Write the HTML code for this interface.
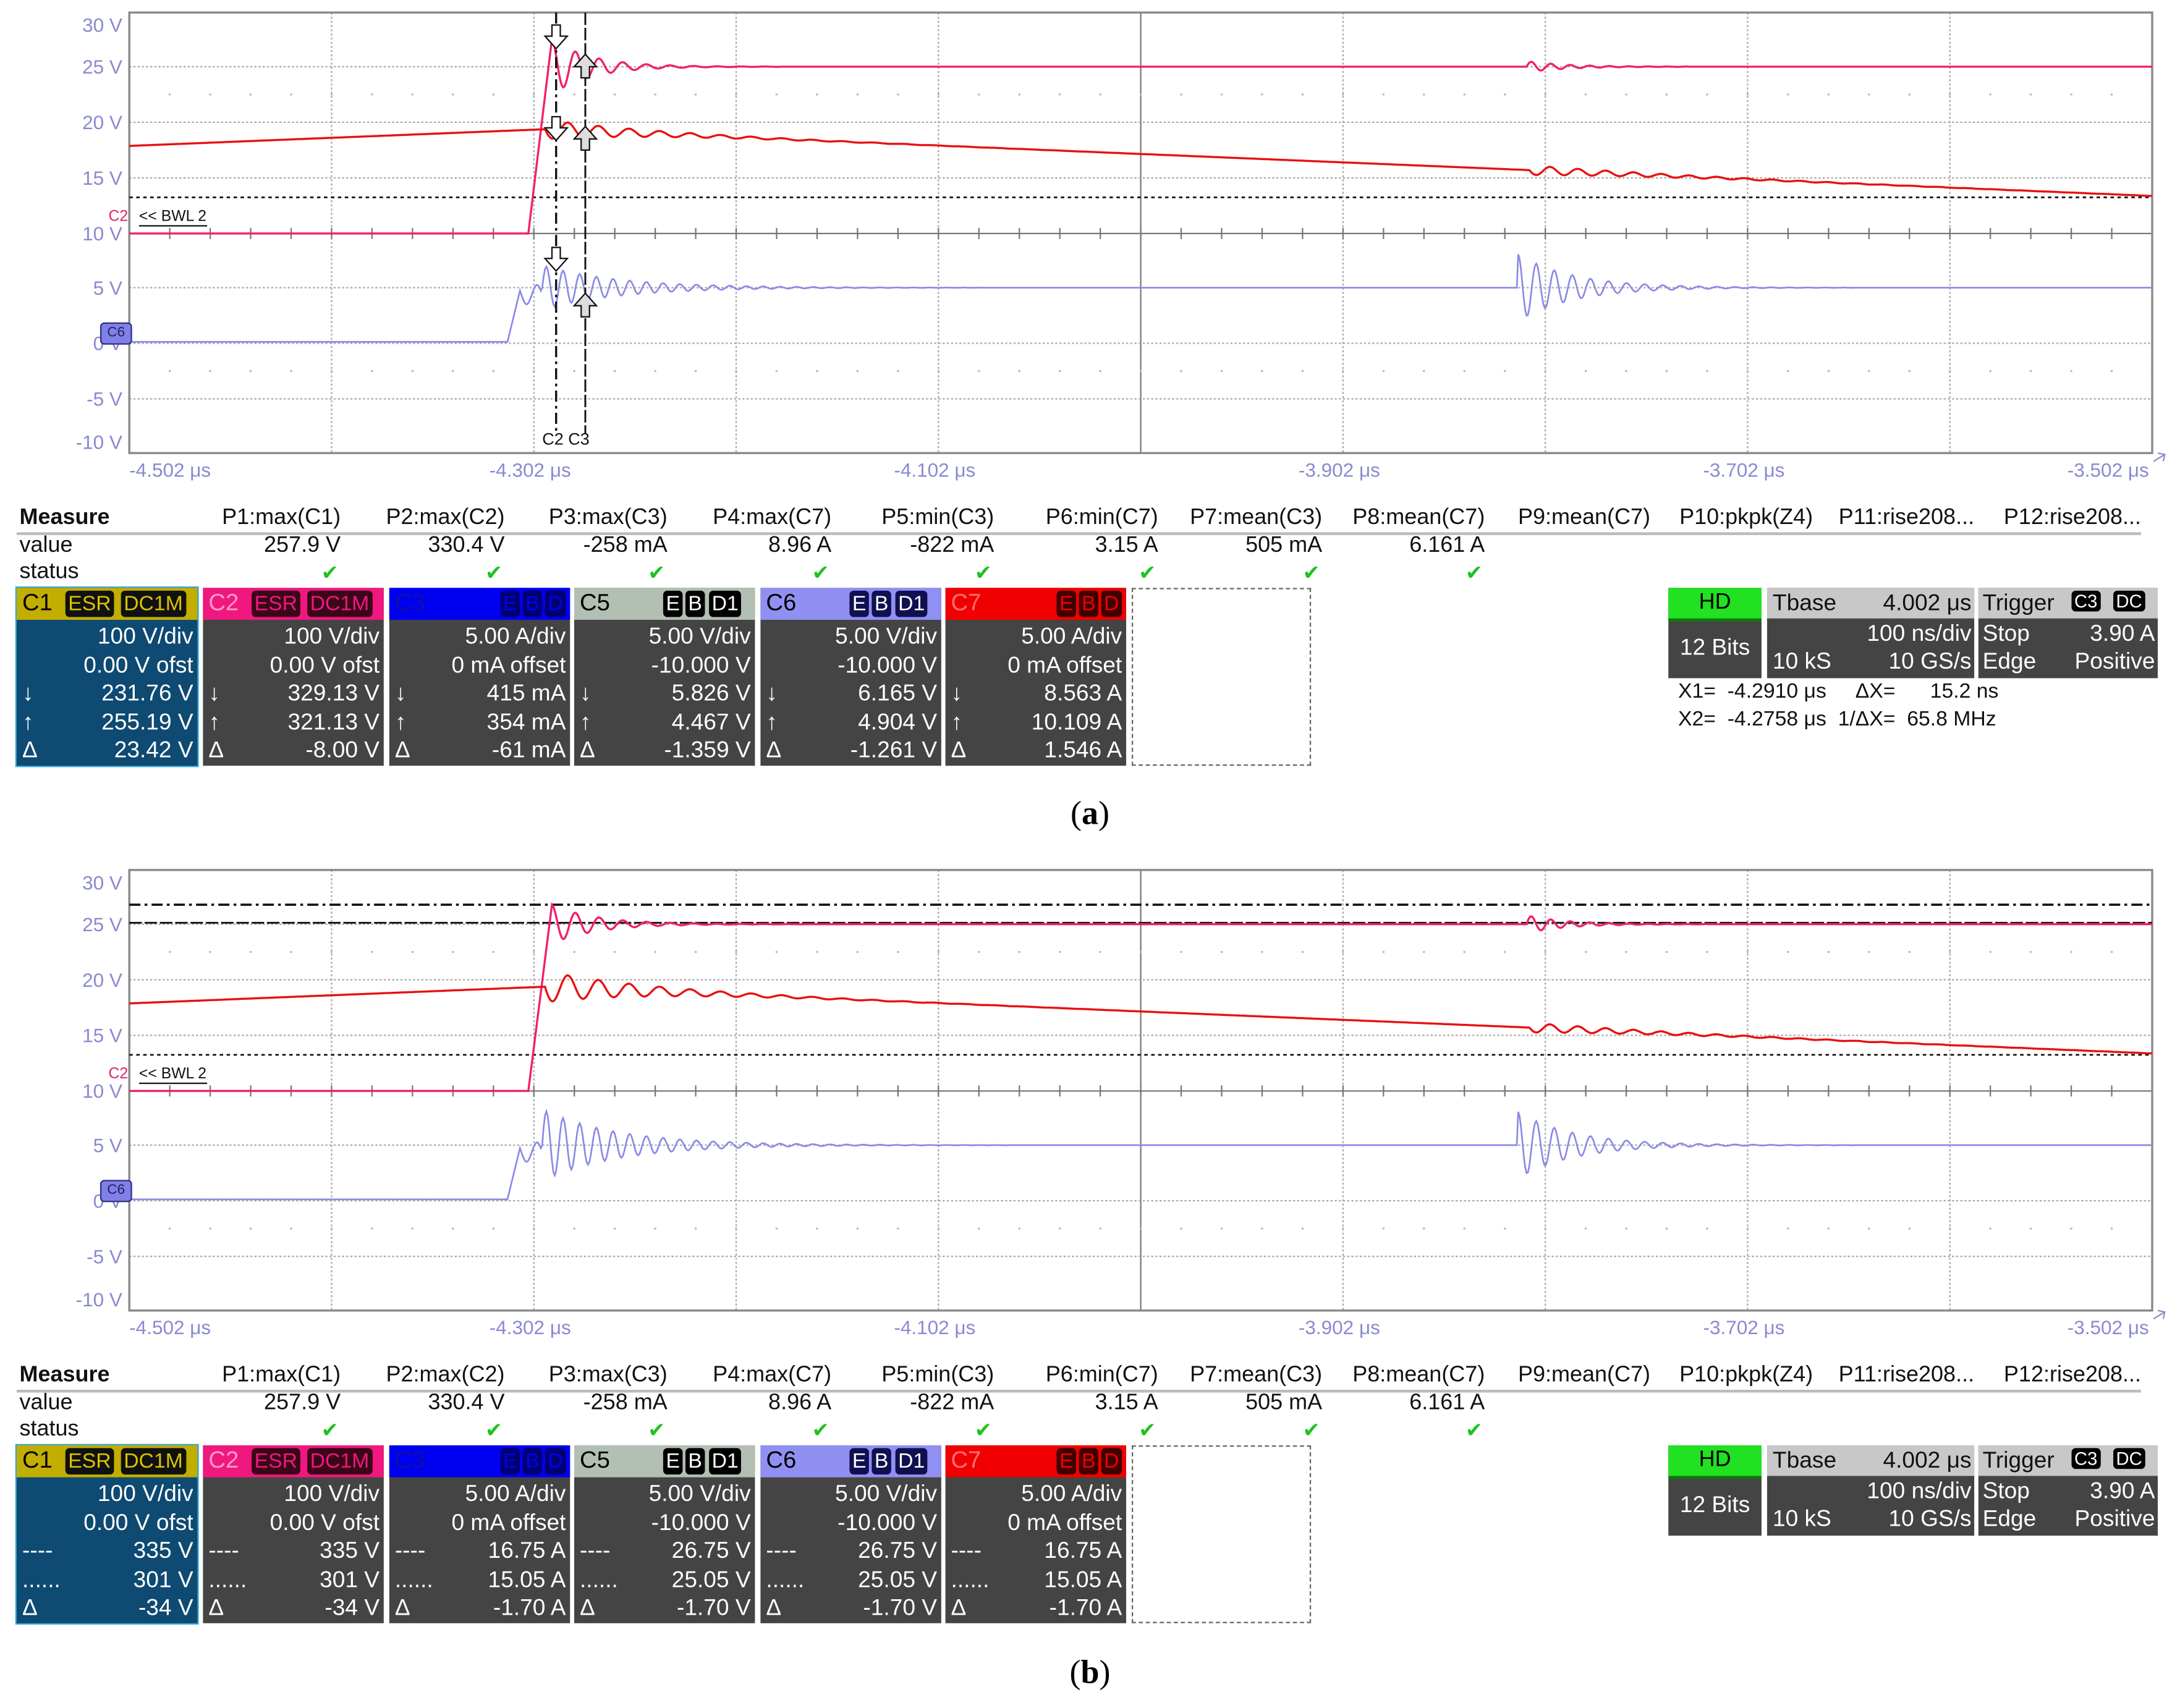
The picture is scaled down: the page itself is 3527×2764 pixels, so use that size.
<!DOCTYPE html>
<html><head><meta charset="utf-8">
<style>
html,body{margin:0;padding:0;background:#fff;}
body{width:3527px;height:2764px;overflow:hidden;position:relative;}
#w{position:absolute;left:0;top:0;width:1568px;height:1229px;transform:scale(2.24936,2.24898);transform-origin:0 0;font-family:"Liberation Sans Narrow","Liberation Sans",sans-serif;}
.p{position:absolute;left:0;width:1568px;height:600px;}
.a{position:absolute;white-space:nowrap;}
.ax{color:#8a8ad0;font-size:14px;}
.m{font-size:16px;color:#111;}
.r{text-align:right;}
.box{position:absolute;top:423px;width:130px;height:128px;background:#444;}
.hd{position:absolute;left:0;top:0;width:130px;height:23px;font-size:17px;}
.hd span.n{position:absolute;left:4px;top:1px;}
.pl{position:absolute;top:2px;height:19px;border-radius:3px;font-size:15px;line-height:19px;padding:0 2px;}
.rows{position:absolute;left:0;top:25px;width:130px;color:#fff;font-size:16.5px;}
.rows div{height:20.6px;line-height:20.6px;position:relative;text-align:right;padding-right:3px;}
.rows div i{position:absolute;left:4px;font-style:normal;}
.ck{position:absolute;color:#1fc21f;font-size:15px;top:403px;}
.cap{position:absolute;left:0;width:1568px;text-align:center;font-family:"Liberation Serif",serif;font-size:24px;color:#000;}
</style></head><body><div id="w">

<!-- ===== PANEL A ===== -->
<div class="p" id="pa" style="top:0">
<svg id="sa" width="1568" height="360" style="position:absolute;left:0;top:0"></svg>
<div class="a ax r" style="left:40px;top:10px;width:48px">30 V</div>
<div class="a ax r" style="left:40px;top:40px;width:48px">25 V</div>
<div class="a ax r" style="left:40px;top:80px;width:48px">20 V</div>
<div class="a ax r" style="left:40px;top:120px;width:48px">15 V</div>
<div class="a ax r" style="left:40px;top:160px;width:48px">10 V</div>
<div class="a ax r" style="left:40px;top:199px;width:48px">5 V</div>
<div class="a ax r" style="left:40px;top:239px;width:48px">0 V</div>
<div class="a ax r" style="left:40px;top:279px;width:48px">-5 V</div>
<div class="a ax r" style="left:40px;top:310px;width:48px">-10 V</div>
<div class="a ax" style="left:93px;top:330px">-4.502 μs</div>
<div class="a ax" style="left:352px;top:330px">-4.302 μs</div>
<div class="a ax" style="left:643px;top:330px">-4.102 μs</div>
<div class="a ax" style="left:934px;top:330px">-3.902 μs</div>
<div class="a ax" style="left:1225px;top:330px">-3.702 μs</div>
<div class="a ax" style="left:1487px;top:330px">-3.502 μs</div>
<div class="a" style="left:78px;top:150px;color:#e0206a;font-size:11px">C2</div>
<div class="a" style="left:100px;top:150px;color:#111;font-size:11px;border-bottom:1px solid #111">&lt;&lt; BWL 2</div>
<div class="a" style="left:72px;top:232px;width:21px;height:14px;background:#8080e8;border:1px solid #303080;border-radius:3px;font-size:10px;text-align:center;line-height:14px;color:#202060">C6</div>
<div class="a" style="left:390px;top:309px;font-size:12px;color:#111">C2 C3</div>
</div>

<!-- ===== PANEL B ===== -->
<div class="p" id="pb" style="top:617px">
<svg id="sb" width="1568" height="360" style="position:absolute;left:0;top:0"></svg>
<div class="a ax r" style="left:40px;top:10px;width:48px">30 V</div>
<div class="a ax r" style="left:40px;top:40px;width:48px">25 V</div>
<div class="a ax r" style="left:40px;top:80px;width:48px">20 V</div>
<div class="a ax r" style="left:40px;top:120px;width:48px">15 V</div>
<div class="a ax r" style="left:40px;top:160px;width:48px">10 V</div>
<div class="a ax r" style="left:40px;top:199px;width:48px">5 V</div>
<div class="a ax r" style="left:40px;top:239px;width:48px">0 V</div>
<div class="a ax r" style="left:40px;top:279px;width:48px">-5 V</div>
<div class="a ax r" style="left:40px;top:310px;width:48px">-10 V</div>
<div class="a ax" style="left:93px;top:330px">-4.502 μs</div>
<div class="a ax" style="left:352px;top:330px">-4.302 μs</div>
<div class="a ax" style="left:643px;top:330px">-4.102 μs</div>
<div class="a ax" style="left:934px;top:330px">-3.902 μs</div>
<div class="a ax" style="left:1225px;top:330px">-3.702 μs</div>
<div class="a ax" style="left:1487px;top:330px">-3.502 μs</div>
<div class="a" style="left:78px;top:150px;color:#e0206a;font-size:11px">C2</div>
<div class="a" style="left:100px;top:150px;color:#111;font-size:11px;border-bottom:1px solid #111">&lt;&lt; BWL 2</div>
<div class="a" style="left:72px;top:232px;width:21px;height:14px;background:#8080e8;border:1px solid #303080;border-radius:3px;font-size:10px;text-align:center;line-height:14px;color:#202060">C6</div>
</div>

<!-- ===== MEASURE A ===== -->
<div class="p" style="top:0">
<div class="a m" style="left:14px;top:364px;font-weight:bold">Measure</div>
<div style="position:absolute;left:12px;top:383px;width:1528px;height:2px;background:#bbb"></div>
<div class="a m" style="left:14px;top:384px">value</div>
<div class="a m" style="left:14px;top:403px">status</div>
<div class="a m r" style="left:125px;width:120px;top:364px">P1:max(C1)</div>
<div class="a m r" style="left:243px;width:120px;top:364px">P2:max(C2)</div>
<div class="a m r" style="left:360px;width:120px;top:364px">P3:max(C3)</div>
<div class="a m r" style="left:478px;width:120px;top:364px">P4:max(C7)</div>
<div class="a m r" style="left:595px;width:120px;top:364px">P5:min(C3)</div>
<div class="a m r" style="left:713px;width:120px;top:364px">P6:min(C7)</div>
<div class="a m r" style="left:831px;width:120px;top:364px">P7:mean(C3)</div>
<div class="a m r" style="left:948px;width:120px;top:364px">P8:mean(C7)</div>
<div class="a m r" style="left:1067px;width:120px;top:364px">P9:mean(C7)</div>
<div class="a m r" style="left:1184px;width:120px;top:364px">P10:pkpk(Z4)</div>
<div class="a m r" style="left:1300px;width:120px;top:364px">P11:rise208...</div>
<div class="a m r" style="left:1420px;width:120px;top:364px">P12:rise208...</div>
<div class="a m r" style="left:125px;width:120px;top:384px">257.9 V</div>
<div class="a m r" style="left:243px;width:120px;top:384px">330.4 V</div>
<div class="a m r" style="left:360px;width:120px;top:384px">-258 mA</div>
<div class="a m r" style="left:478px;width:120px;top:384px">8.96 A</div>
<div class="a m r" style="left:595px;width:120px;top:384px">-822 mA</div>
<div class="a m r" style="left:713px;width:120px;top:384px">3.15 A</div>
<div class="a m r" style="left:831px;width:120px;top:384px">505 mA</div>
<div class="a m r" style="left:948px;width:120px;top:384px">6.161 A</div>
<div class="ck" style="left:231px">✔</div><div class="ck" style="left:349px">✔</div><div class="ck" style="left:466px">✔</div><div class="ck" style="left:584px">✔</div><div class="ck" style="left:701px">✔</div><div class="ck" style="left:819px">✔</div><div class="ck" style="left:937px">✔</div><div class="ck" style="left:1054px">✔</div>
</div>
<div class="p" style="top:617px">
<div class="a m" style="left:14px;top:364px;font-weight:bold">Measure</div>
<div style="position:absolute;left:12px;top:383px;width:1528px;height:2px;background:#bbb"></div>
<div class="a m" style="left:14px;top:384px">value</div>
<div class="a m" style="left:14px;top:403px">status</div>
<div class="a m r" style="left:125px;width:120px;top:364px">P1:max(C1)</div>
<div class="a m r" style="left:243px;width:120px;top:364px">P2:max(C2)</div>
<div class="a m r" style="left:360px;width:120px;top:364px">P3:max(C3)</div>
<div class="a m r" style="left:478px;width:120px;top:364px">P4:max(C7)</div>
<div class="a m r" style="left:595px;width:120px;top:364px">P5:min(C3)</div>
<div class="a m r" style="left:713px;width:120px;top:364px">P6:min(C7)</div>
<div class="a m r" style="left:831px;width:120px;top:364px">P7:mean(C3)</div>
<div class="a m r" style="left:948px;width:120px;top:364px">P8:mean(C7)</div>
<div class="a m r" style="left:1067px;width:120px;top:364px">P9:mean(C7)</div>
<div class="a m r" style="left:1184px;width:120px;top:364px">P10:pkpk(Z4)</div>
<div class="a m r" style="left:1300px;width:120px;top:364px">P11:rise208...</div>
<div class="a m r" style="left:1420px;width:120px;top:364px">P12:rise208...</div>
<div class="a m r" style="left:125px;width:120px;top:384px">257.9 V</div>
<div class="a m r" style="left:243px;width:120px;top:384px">330.4 V</div>
<div class="a m r" style="left:360px;width:120px;top:384px">-258 mA</div>
<div class="a m r" style="left:478px;width:120px;top:384px">8.96 A</div>
<div class="a m r" style="left:595px;width:120px;top:384px">-822 mA</div>
<div class="a m r" style="left:713px;width:120px;top:384px">3.15 A</div>
<div class="a m r" style="left:831px;width:120px;top:384px">505 mA</div>
<div class="a m r" style="left:948px;width:120px;top:384px">6.161 A</div>
<div class="ck" style="left:231px">✔</div><div class="ck" style="left:349px">✔</div><div class="ck" style="left:466px">✔</div><div class="ck" style="left:584px">✔</div><div class="ck" style="left:701px">✔</div><div class="ck" style="left:819px">✔</div><div class="ck" style="left:937px">✔</div><div class="ck" style="left:1054px">✔</div>
</div>

<!-- ===== CHANNEL BOXES A ===== -->
<div class="p" style="top:0">
<div class="box" style="left:12px;background:#0e4a72;box-shadow:0 0 0 1px #39a8dc"><div class="hd" style="background:#c2ae00"><span class="n" style="color:#000">C1</span><span class="pl" style="left:35px;background:#111;color:#d8c400">ESR</span><span class="pl" style="left:75px;background:#111;color:#d8c400">DC1M</span></div>
<div class="rows"><div>100 V/div</div><div>0.00 V ofst</div><div><i>↓</i>231.76 V</div><div><i>↑</i>255.19 V</div><div><i>Δ</i>23.42 V</div></div></div>
<div class="box" style="left:146px"><div class="hd" style="background:#f0187e"><span class="n" style="color:#ff9ac8">C2</span><span class="pl" style="left:35px;background:#3a0618;color:#f0187e">ESR</span><span class="pl" style="left:75px;background:#3a0618;color:#f0187e">DC1M</span></div>
<div class="rows"><div>100 V/div</div><div>0.00 V ofst</div><div><i>↓</i>329.13 V</div><div><i>↑</i>321.13 V</div><div><i>Δ</i>-8.00 V</div></div></div>
<div class="box" style="left:280px"><div class="hd" style="background:#0000f0"><span class="n" style="color:#1010a0">C3</span><span class="pl" style="left:80px;background:#000070;color:#0000f0">E</span><span class="pl" style="left:96px;background:#000070;color:#0000f0">B</span><span class="pl" style="left:112px;background:#000070;color:#0000f0">D</span></div>
<div class="rows"><div>5.00 A/div</div><div>0 mA offset</div><div><i>↓</i>415 mA</div><div><i>↑</i>354 mA</div><div><i>Δ</i>-61 mA</div></div></div>
<div class="box" style="left:413px"><div class="hd" style="background:#b2bfb2"><span class="n" style="color:#000">C5</span><span class="pl" style="left:64px;background:#000;color:#fff">E</span><span class="pl" style="left:80px;background:#000;color:#fff">B</span><span class="pl" style="left:97px;background:#000;color:#fff">D1</span></div>
<div class="rows"><div>5.00 V/div</div><div>-10.000 V</div><div><i>↓</i>5.826 V</div><div><i>↑</i>4.467 V</div><div><i>Δ</i>-1.359 V</div></div></div>
<div class="box" style="left:547px"><div class="hd" style="background:#9090f2"><span class="n" style="color:#000">C6</span><span class="pl" style="left:64px;background:#101050;color:#fff">E</span><span class="pl" style="left:80px;background:#101050;color:#fff">B</span><span class="pl" style="left:97px;background:#101050;color:#fff">D1</span></div>
<div class="rows"><div>5.00 V/div</div><div>-10.000 V</div><div><i>↓</i>6.165 V</div><div><i>↑</i>4.904 V</div><div><i>Δ</i>-1.261 V</div></div></div>
<div class="box" style="left:680px"><div class="hd" style="background:#f00000"><span class="n" style="color:#ff7070">C7</span><span class="pl" style="left:80px;background:#400000;color:#f00000">E</span><span class="pl" style="left:96px;background:#400000;color:#f00000">B</span><span class="pl" style="left:112px;background:#400000;color:#f00000">D</span></div>
<div class="rows"><div>5.00 A/div</div><div>0 mA offset</div><div><i>↓</i>8.563 A</div><div><i>↑</i>10.109 A</div><div><i>Δ</i>1.546 A</div></div></div>
<div style="position:absolute;left:814px;top:423px;width:127px;height:126px;border:1px dashed #666"></div>
</div>

<!-- ===== CHANNEL BOXES B ===== -->
<div class="p" style="top:617px">
<div class="box" style="left:12px;background:#0e4a72;box-shadow:0 0 0 1px #39a8dc"><div class="hd" style="background:#c2ae00"><span class="n" style="color:#000">C1</span><span class="pl" style="left:35px;background:#111;color:#d8c400">ESR</span><span class="pl" style="left:75px;background:#111;color:#d8c400">DC1M</span></div>
<div class="rows"><div>100 V/div</div><div>0.00 V ofst</div><div><i>----</i>335 V</div><div><i>......</i>301 V</div><div><i>Δ</i>-34 V</div></div></div>
<div class="box" style="left:146px"><div class="hd" style="background:#f0187e"><span class="n" style="color:#ff9ac8">C2</span><span class="pl" style="left:35px;background:#3a0618;color:#f0187e">ESR</span><span class="pl" style="left:75px;background:#3a0618;color:#f0187e">DC1M</span></div>
<div class="rows"><div>100 V/div</div><div>0.00 V ofst</div><div><i>----</i>335 V</div><div><i>......</i>301 V</div><div><i>Δ</i>-34 V</div></div></div>
<div class="box" style="left:280px"><div class="hd" style="background:#0000f0"><span class="n" style="color:#1010a0">C3</span><span class="pl" style="left:80px;background:#000070;color:#0000f0">E</span><span class="pl" style="left:96px;background:#000070;color:#0000f0">B</span><span class="pl" style="left:112px;background:#000070;color:#0000f0">D</span></div>
<div class="rows"><div>5.00 A/div</div><div>0 mA offset</div><div><i>----</i>16.75 A</div><div><i>......</i>15.05 A</div><div><i>Δ</i>-1.70 A</div></div></div>
<div class="box" style="left:413px"><div class="hd" style="background:#b2bfb2"><span class="n" style="color:#000">C5</span><span class="pl" style="left:64px;background:#000;color:#fff">E</span><span class="pl" style="left:80px;background:#000;color:#fff">B</span><span class="pl" style="left:97px;background:#000;color:#fff">D1</span></div>
<div class="rows"><div>5.00 V/div</div><div>-10.000 V</div><div><i>----</i>26.75 V</div><div><i>......</i>25.05 V</div><div><i>Δ</i>-1.70 V</div></div></div>
<div class="box" style="left:547px"><div class="hd" style="background:#9090f2"><span class="n" style="color:#000">C6</span><span class="pl" style="left:64px;background:#101050;color:#fff">E</span><span class="pl" style="left:80px;background:#101050;color:#fff">B</span><span class="pl" style="left:97px;background:#101050;color:#fff">D1</span></div>
<div class="rows"><div>5.00 V/div</div><div>-10.000 V</div><div><i>----</i>26.75 V</div><div><i>......</i>25.05 V</div><div><i>Δ</i>-1.70 V</div></div></div>
<div class="box" style="left:680px"><div class="hd" style="background:#f00000"><span class="n" style="color:#ff7070">C7</span><span class="pl" style="left:80px;background:#400000;color:#f00000">E</span><span class="pl" style="left:96px;background:#400000;color:#f00000">B</span><span class="pl" style="left:112px;background:#400000;color:#f00000">D</span></div>
<div class="rows"><div>5.00 A/div</div><div>0 mA offset</div><div><i>----</i>16.75 A</div><div><i>......</i>15.05 A</div><div><i>Δ</i>-1.70 A</div></div></div>
<div style="position:absolute;left:814px;top:423px;width:127px;height:126px;border:1px dashed #666"></div>
</div>

<!-- ===== RIGHT STATUS BOXES ===== -->
<div class="p" style="top:0">
<div style="position:absolute;left:1200px;top:423px;width:67px;height:65px;background:#444"><div style="height:22px;background:#22e022;border-bottom:2px solid #0a7a0a;text-align:center;font-size:16px;line-height:22px;color:#000">HD</div><div style="color:#fff;font-size:16.5px;text-align:center;margin-top:10px">12 Bits</div></div>
<div style="position:absolute;left:1271px;top:423px;width:149px;height:65px;background:#444;color:#fff;font-size:16.5px"><div style="height:22px;background:#c8c8c8;color:#111;position:relative"><span style="position:absolute;left:4px;top:2px">Tbase</span><span style="position:absolute;right:2px;top:2px">4.002 μs</span></div><div style="position:absolute;right:2px;top:24px">100 ns/div</div><div style="position:absolute;left:4px;top:44px">10 kS</div><div style="position:absolute;right:2px;top:44px">10 GS/s</div></div>
<div style="position:absolute;left:1423px;top:423px;width:129px;height:65px;background:#444;color:#fff;font-size:16.5px"><div style="height:22px;background:#c8c8c8;color:#111;position:relative"><span style="position:absolute;left:3px;top:2px">Trigger</span><span style="position:absolute;left:67px;top:2px;background:#000;color:#fff;font-size:13px;padding:0 2px;border-radius:3px">C3</span><span style="position:absolute;left:97px;top:2px;background:#000;color:#fff;font-size:13px;padding:0 2px;border-radius:3px">DC</span></div><div style="position:absolute;left:3px;top:24px">Stop</div><div style="position:absolute;right:2px;top:24px">3.90 A</div><div style="position:absolute;left:3px;top:44px">Edge</div><div style="position:absolute;right:2px;top:44px">Positive</div></div>
<div class="a m" style="left:1207px;top:489px;font-size:15px">X1=&nbsp; -4.2910 μs&nbsp;&nbsp;&nbsp;&nbsp; ΔX=&nbsp;&nbsp;&nbsp;&nbsp;&nbsp; 15.2 ns</div>
<div class="a m" style="left:1207px;top:509px;font-size:15px">X2=&nbsp; -4.2758 μs&nbsp; 1/ΔX=&nbsp; 65.8 MHz</div>
</div>
<div class="p" style="top:617px">
<div style="position:absolute;left:1200px;top:423px;width:67px;height:65px;background:#444"><div style="height:22px;background:#22e022;border-bottom:2px solid #0a7a0a;text-align:center;font-size:16px;line-height:22px;color:#000">HD</div><div style="color:#fff;font-size:16.5px;text-align:center;margin-top:10px">12 Bits</div></div>
<div style="position:absolute;left:1271px;top:423px;width:149px;height:65px;background:#444;color:#fff;font-size:16.5px"><div style="height:22px;background:#c8c8c8;color:#111;position:relative"><span style="position:absolute;left:4px;top:2px">Tbase</span><span style="position:absolute;right:2px;top:2px">4.002 μs</span></div><div style="position:absolute;right:2px;top:24px">100 ns/div</div><div style="position:absolute;left:4px;top:44px">10 kS</div><div style="position:absolute;right:2px;top:44px">10 GS/s</div></div>
<div style="position:absolute;left:1423px;top:423px;width:129px;height:65px;background:#444;color:#fff;font-size:16.5px"><div style="height:22px;background:#c8c8c8;color:#111;position:relative"><span style="position:absolute;left:3px;top:2px">Trigger</span><span style="position:absolute;left:67px;top:2px;background:#000;color:#fff;font-size:13px;padding:0 2px;border-radius:3px">C3</span><span style="position:absolute;left:97px;top:2px;background:#000;color:#fff;font-size:13px;padding:0 2px;border-radius:3px">DC</span></div><div style="position:absolute;left:3px;top:24px">Stop</div><div style="position:absolute;right:2px;top:24px">3.90 A</div><div style="position:absolute;left:3px;top:44px">Edge</div><div style="position:absolute;right:2px;top:44px">Positive</div></div>
</div>

<div class="cap" style="top:573px">(<b>a</b>)</div>
<div class="cap" style="top:1191px">(<b>b</b>)</div>
</div>

<script>
(function(){
var NS="http://www.w3.org/2000/svg";
function el(svg,tag,attrs){var e=document.createElementNS(NS,tag);for(var k in attrs)e.setAttribute(k,attrs[k]);svg.appendChild(e);return e;}
function ring(x,x0,A,tau,P){if(x<x0)return 0;var t=x-x0;return A*Math.exp(-t/tau)*Math.sin(2*Math.PI*t/P);}
function path(f){var s="";for(var x=93;x<=1548;x+=1){s+=(x==93?"M":"L")+x+","+f(x).toFixed(1);}return s;}
function grid(svg,b){
  var L=93,R=1548,T=9,B=326;
  for(var i=1;i<10;i++){var x=L+i*145.5;el(svg,"line",{x1:x,y1:T,x2:x,y2:B,stroke:i==5?"#777":"#aaa","stroke-width":1,"stroke-dasharray":i==5?"":"1.5 1.5"});}
  var ys=[48,88,128,168,207,247,287];
  ys.forEach(function(y){el(svg,"line",{x1:L,y1:y,x2:R,y2:y,stroke:y==168?"#777":"#aaa","stroke-width":1,"stroke-dasharray":y==168?"":"1.5 1.5"});});
  for(var x=L;x<=R;x+=29.1){el(svg,"line",{x1:x,y1:164,x2:x,y2:172,stroke:"#777","stroke-width":1});
    el(svg,"circle",{cx:x,cy:68,r:0.8,fill:"#bbb"});el(svg,"circle",{cx:x,cy:267,r:0.8,fill:"#bbb"});}
  el(svg,"rect",{x:L,y:T,width:R-L,height:B-T,fill:"none",stroke:"#888","stroke-width":1.5});
  el(svg,"path",{d:"M1549,332 L1557,327 M1552,326 L1557,327 L1556,332",stroke:"#8a8ad0",fill:"none","stroke-width":1});
}
function panel(svg,b){
  grid(svg,b);
  var k=b?1.6:1;
  if(b){
    el(svg,"line",{x1:93,y1:34,x2:1548,y2:34,stroke:"#111","stroke-width":1.6,"stroke-dasharray":"8 3 2 3"});
    el(svg,"line",{x1:93,y1:47,x2:1548,y2:47,stroke:"#111","stroke-width":1.3,"stroke-dasharray":"9 2"});
    el(svg,"line",{x1:93,y1:142,x2:1548,y2:142,stroke:"#111","stroke-width":1.2,"stroke-dasharray":"2.5 2.5"});
  } else {
    el(svg,"line",{x1:93,y1:142,x2:1548,y2:142,stroke:"#111","stroke-width":1.2,"stroke-dasharray":"2.5 2.5"});
  }
  var pink=path(function(x){
    if(x<380)return 168; if(x<397)return 168-(x-380)*(b?134:140)/17;
    var y=48-(b?14:20)*Math.exp(-(x-397)/(b?32:28))*Math.cos(2*Math.PI*(x-397)/17);
    return y+ring(x,1098,-4*k,28,14);});
  el(svg,"path",{d:pink,stroke:"#f0206e",fill:"none","stroke-width":1.5});
  var red=path(function(x){
    if(x<392)return 105-(x-93)*12/299;
    var base=93+(x-392)*48/1156;
    return base+ring(x,392,7*k,70,22)+ring(x,1100,3.5,90,20);});
  el(svg,"path",{d:red,stroke:"#e81010",fill:"none","stroke-width":1.5});
  var blue=path(function(x){
    if(x<365)return 246; if(x<375)return 246-(x-365)*4.1;
    if(x<390)return 212+7*Math.sin((x-375)/15*2*Math.PI);
    var y=207+ring(x,390,-16*k,55,12);
    if(x>=1092)y+=-24*Math.exp(-(x-1092)/40)*Math.cos(2*Math.PI*(x-1092)/13);
    return y;});
  el(svg,"path",{d:blue,stroke:"#8a8ae6",fill:"none","stroke-width":1.2});
  if(!b){
    el(svg,"line",{x1:400,y1:9,x2:400,y2:312,stroke:"#111","stroke-width":1.5,"stroke-dasharray":"8 3 2 3"});
    el(svg,"line",{x1:421,y1:9,x2:421,y2:312,stroke:"#111","stroke-width":1.3,"stroke-dasharray":"9 2"});
    function dn(cx,cy){el(svg,"path",{d:"M"+(cx-3)+","+(cy-12)+" h6 v8 h5 l-8,9 l-8,-9 h5z",fill:"#fff",stroke:"#111","stroke-width":1});}
    function up(cx,cy){el(svg,"path",{d:"M"+(cx-3)+","+(cy+12)+" h6 v-8 h5 l-8,-9 l-8,9 h5z",fill:"#ddd",stroke:"#111","stroke-width":1});}
    dn(400,30);dn(400,96);dn(400,190);up(421,44);up(421,96);up(421,216);
  }
}
panel(document.getElementById("sa"),false);
panel(document.getElementById("sb"),true);
})();
</script>
</body></html>
